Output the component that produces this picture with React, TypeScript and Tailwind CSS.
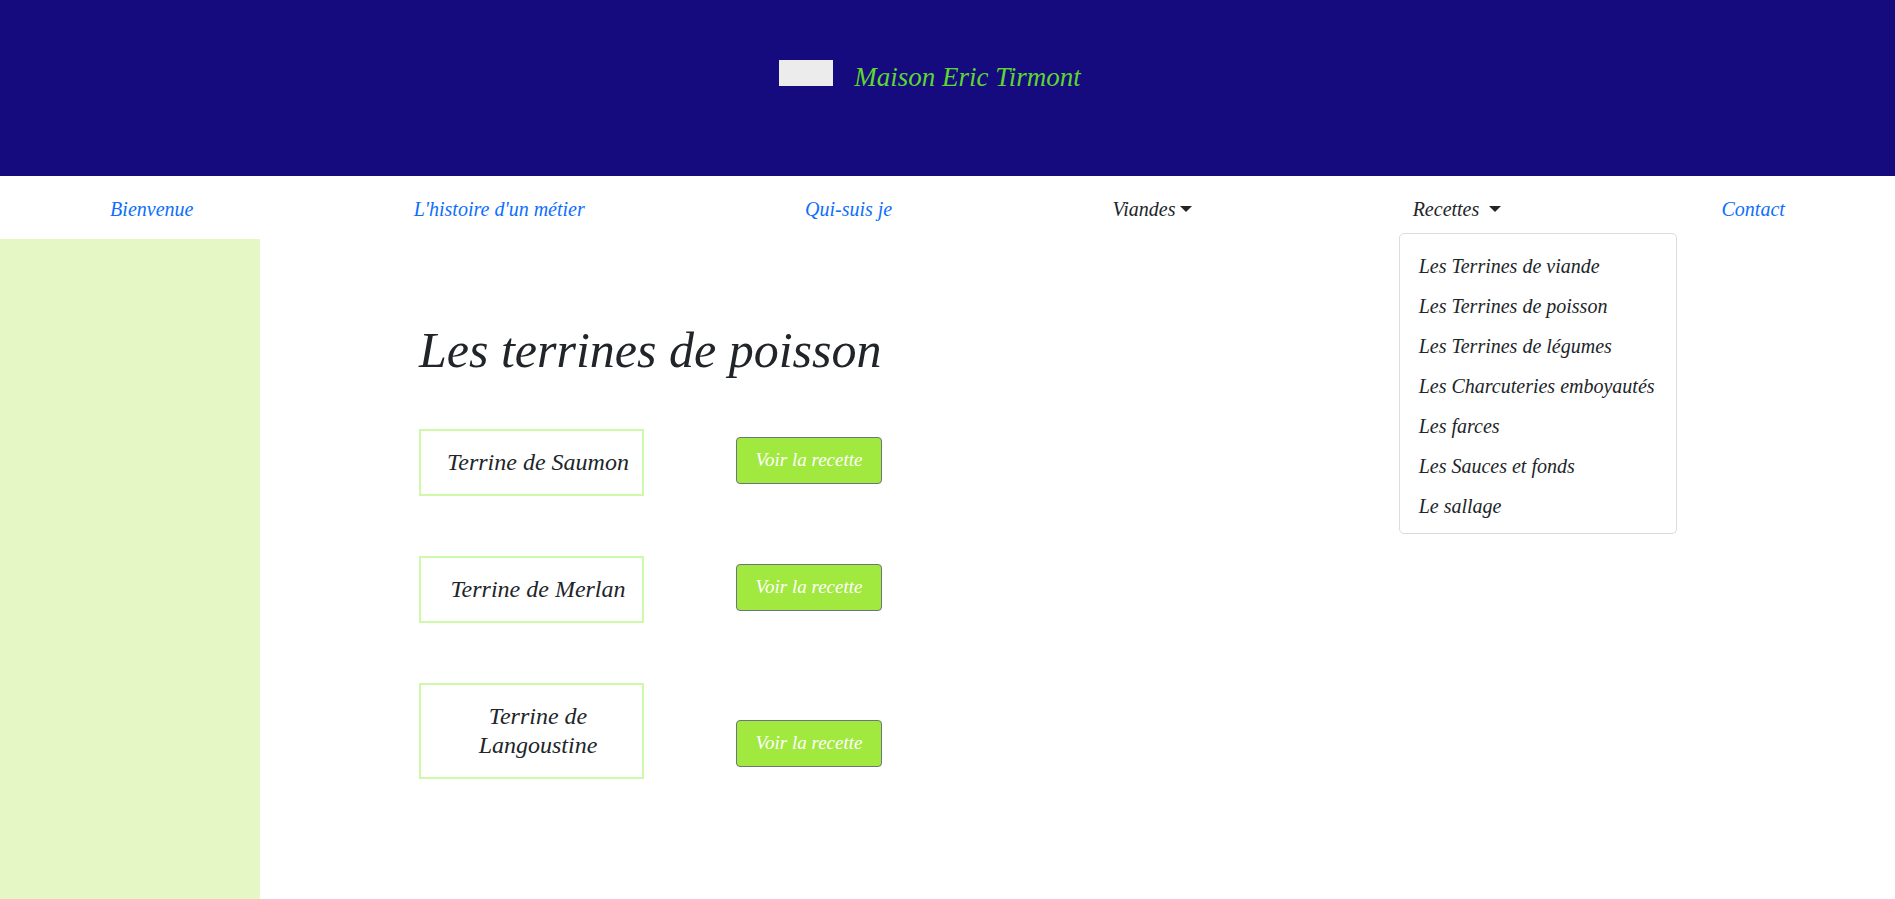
import { useState } from "react";

const navLinks = [
  { label: "Bienvenue", kind: "link" },
  { label: "L'histoire d'un métier", kind: "link" },
  { label: "Qui-suis je", kind: "link" },
  { label: "Viandes", kind: "dropdown" },
  { label: "Recettes", kind: "dropdown" },
  { label: "Contact", kind: "link" },
];

const recettesMenu = [
  "Les Terrines de viande",
  "Les Terrines de poisson",
  "Les Terrines de légumes",
  "Les Charcuteries emboyautés",
  "Les farces",
  "Les Sauces et fonds",
  "Le sallage",
];

const terrines = ["Terrine de Saumon", "Terrine de Merlan", "Terrine de Langoustine"];

function Caret() {
  return (
    <span className="ml-[5px] inline-block h-0 w-0 border-x-[6px] border-t-[6px] border-x-transparent border-t-[#212529] align-[4px]" />
  );
}

export default function App() {
  const [openMenu] = useState("Recettes");

  return (
    <div className="flex min-h-screen flex-col bg-white font-['Liberation_Serif','Times_New_Roman',serif] italic text-[#212529]">
      {/* Header */}
      <header className="flex h-[176px] items-start justify-center bg-[#150a7e] pr-[35px] pt-[57px]">
        <div className="flex items-start gap-[21px]">
          <div className="mt-[3px] h-[26px] w-[54px] bg-[#ececec]" />
          <span className="mt-[4px] text-[27px] leading-[1.2] text-[#5dd62f]">Maison Eric Tirmont</span>
        </div>
      </header>

      {/* Nav */}
      <nav className="relative z-10 flex items-center justify-around bg-white pb-[7px] pt-[10px]">
        {navLinks.map((item) => (
          <div key={item.label} className="relative">
            {item.kind === "link" ? (
              <a className="block px-[16px] py-[8px] text-[20px] leading-[30px] text-[#0d6efd]">{item.label}</a>
            ) : (
              <a className="block px-[16px] py-[8px] text-[20px] leading-[30px] text-[#212529]">
                {item.label}
                {item.label === "Recettes" ? " " : ""}
                <Caret />
              </a>
            )}
            {item.kind === "dropdown" && openMenu === item.label && (
              <div className="absolute left-[2px] top-full mt-[1px] w-[278px] rounded-[5px] border border-[#dcdcdc] bg-white pb-[7px] pt-[12px]">
                {recettesMenu.map((m) => (
                  <div key={m} className="flex h-[40px] items-center px-[19px] text-[20px] text-[#212529]">
                    {m}
                  </div>
                ))}
              </div>
            )}
          </div>
        ))}
      </nav>

      {/* Body */}
      <div className="flex flex-1">
        <aside className="w-[260px] shrink-0 bg-[#e4f7c4]" />
        <main className="flex-1 pl-[159px]">
          <h1 className="mb-[49px] mt-[81px] text-[50px] leading-[60px]">Les terrines de poisson</h1>
          <div className="flex flex-col gap-[60px]">
            {terrines.map((t) => (
              <div key={t} className="flex items-end">
                <div className="w-[225px] border-2 border-[#cdf9a9] py-[17px] pl-[20px] pr-[7px] text-center text-[24px] leading-[29px]">
                  {t}
                </div>
                <button className="mb-[12px] ml-[92px] h-[47px] w-[146px] rounded-[4px] border border-[#6c757d] bg-[#a1e83f] text-[19px] italic text-white">
                  Voir la recette
                </button>
              </div>
            ))}
          </div>
        </main>
      </div>
    </div>
  );
}
